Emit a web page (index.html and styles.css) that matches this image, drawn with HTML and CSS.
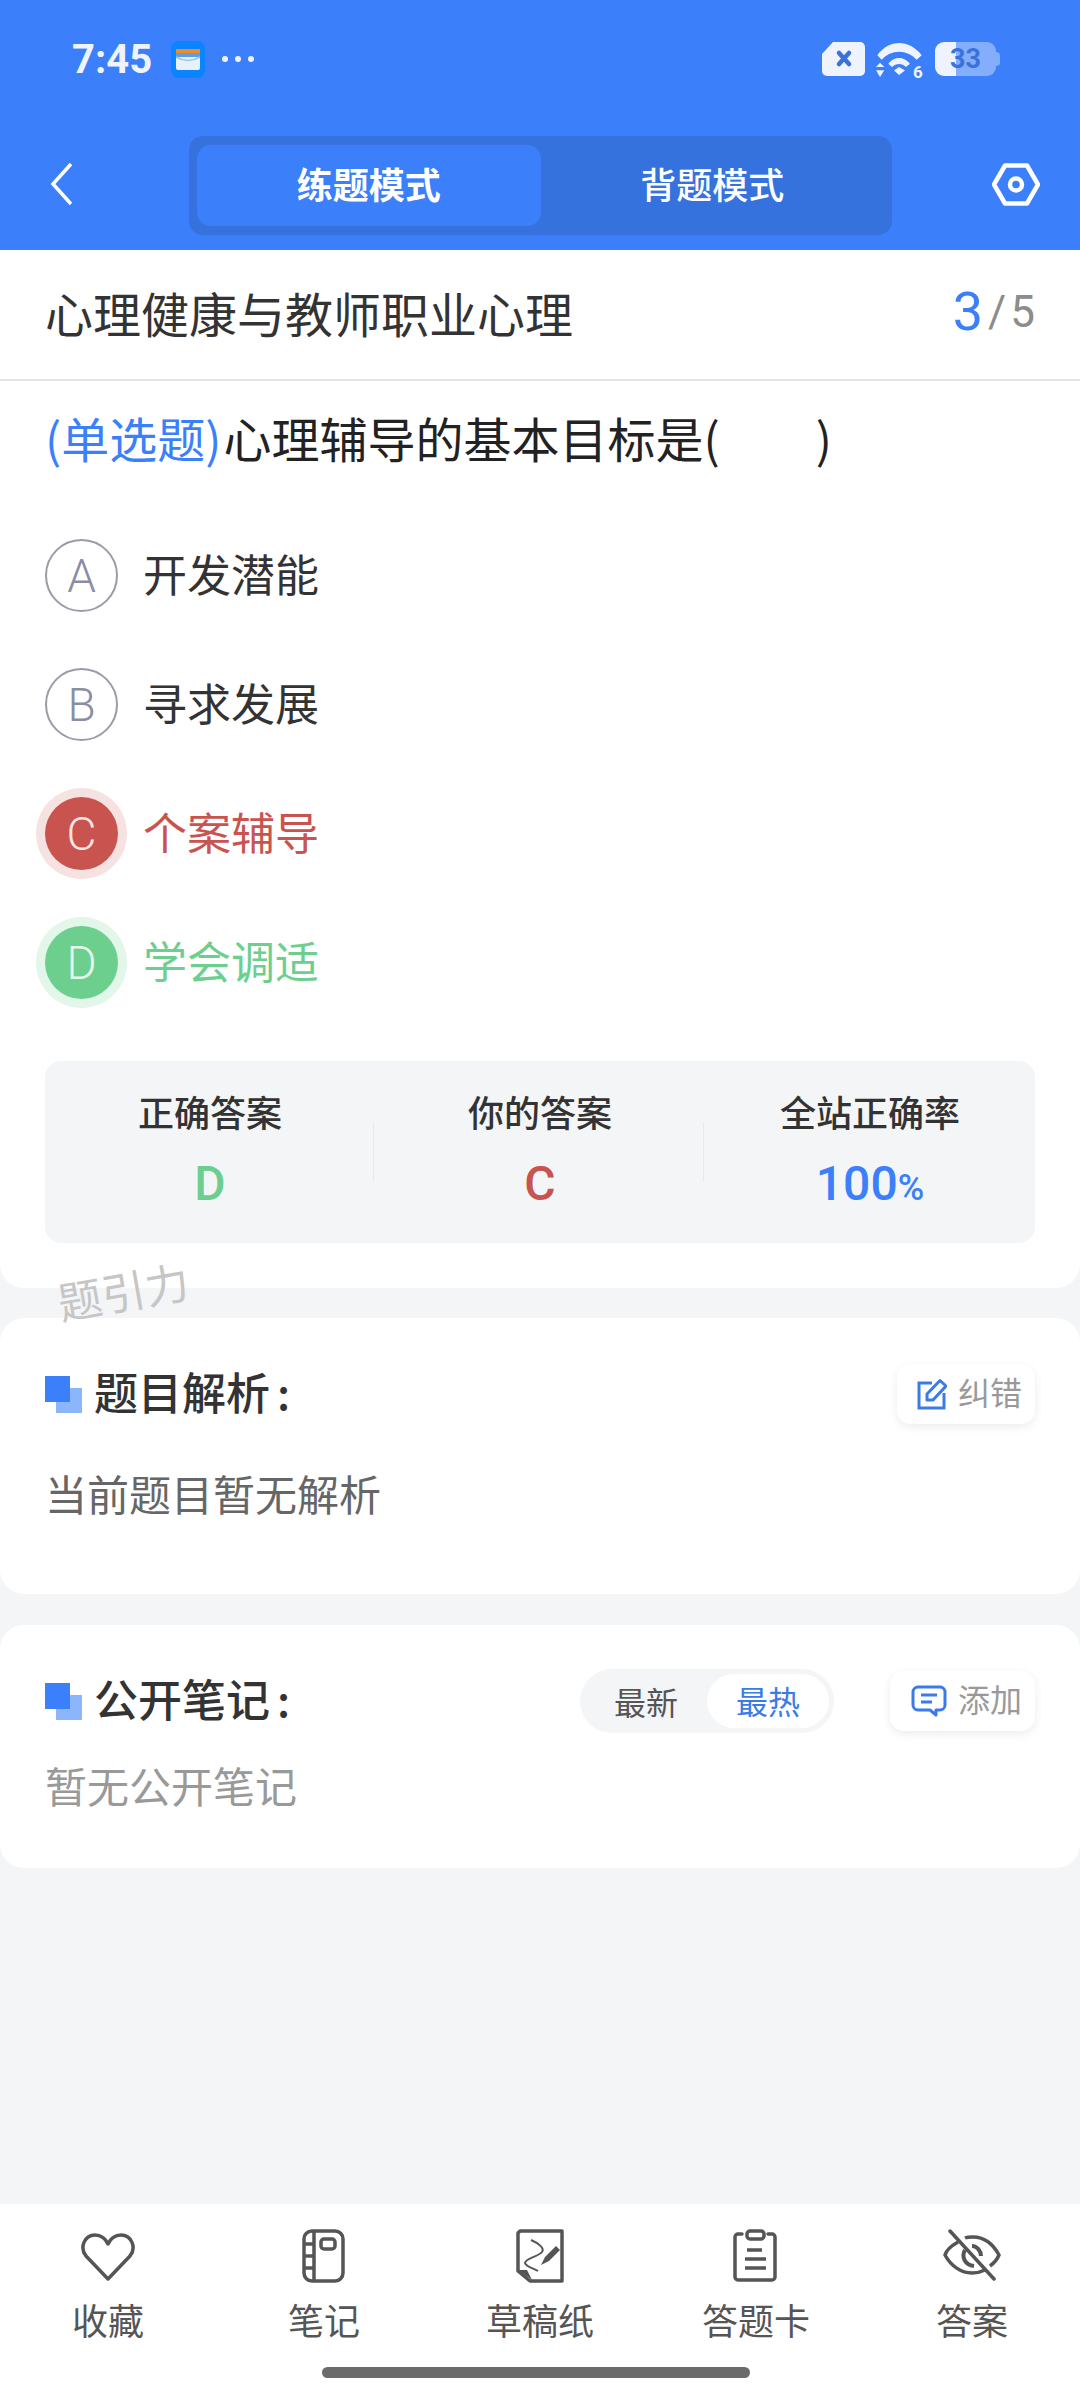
FILE: index.html
```html
<!DOCTYPE html>
<html lang="zh-CN">
<head>
<meta charset="UTF-8">
<meta name="viewport" content="width=device-width, initial-scale=1.0">
<title>练题模式</title>
<link rel="stylesheet" href="styles.css">
</head>
<body>
<div class="page">

<header class="top">
    <div class="status">
        <div class="status-left">
            <span class="time">7:45</span>
            <svg class="wallet" width="34" height="37" viewBox="0 0 34 37">
                <rect width="34" height="37" rx="8" fill="#0a84ff"/>
                <rect x="5" y="8" width="24" height="21" rx="2" fill="#e8f0fa"/>
                <rect x="5" y="8" width="24" height="4" fill="#f08a24"/>
                <rect x="5" y="12" width="24" height="4" fill="#5aa0e8"/>
                <path d="M5 16 Q17 23 29 16" stroke="#9cc4ee" stroke-width="1.5" fill="none"/>
            </svg>
            <span class="dots"><i></i><i></i><i></i></span>
        </div>
        <div class="status-right">
            <svg width="43" height="34" viewBox="0 0 43 34">
                <path d="M11 0H38a5 5 0 0 1 5 5V29a5 5 0 0 1-5 5H5a5 5 0 0 1-5-5V12Z" fill="#eef3fd"/>
                <path d="M17 11l10 11M27 11L17 22" stroke="#3a72dc" stroke-width="4.5" stroke-linecap="round"/>
            </svg>
            <svg class="wifi" width="48" height="42" viewBox="0 0 48 42">
                <path d="M1.300 12.300C13 -4 33 -4 45.700 12.300L40.700 16.700C31 6 15 6 5.700 16.700Z" fill="#eef3fd"/>
                <path d="M12.300 20.700C18 13 28 13 34 20.700L30 24C26 20 20 20 16 24Z" fill="#eef3fd"/>
                <path d="M18 27.500L23 24L29 27.500L23 32Z" fill="#eef3fd"/>
                <path d="M0 24L4 19.700L8.300 24ZM0 27.300H8.300L4 34Z" fill="#eef3fd"/>
                <text class="wifi-six" x="37" y="35">6</text>
            </svg>
            <div class="battery">33</div>
        </div>
    </div>
    <nav class="nav">
        <svg class="back" width="24" height="44" viewBox="0 0 24 44">
            <path d="M21 2L3 22L21 42" stroke="#fff" stroke-width="3.500" fill="none"/>
        </svg>
        <div class="mode-switch">
            <div class="mode mode-on">练题模式</div>
            <div class="mode">背题模式</div>
        </div>
        <svg class="gear" width="48" height="43" viewBox="0 0 48 43">
            <path d="M13 2.500H35L46 21.500L35 40.500H13L2 21.500Z" stroke="#fff" stroke-width="4.500" stroke-linejoin="round" fill="none"/>
            <circle cx="24" cy="21.500" r="6" stroke="#fff" stroke-width="4.500" fill="none"/>
        </svg>
    </nav>
</header>

<main class="main">
    <section class="card question">
        <div class="title-row">
            <div class="subject">心理健康与教师职业心理</div>
            <div class="count"><b>3</b><span class="slash">/</span><span>5</span></div>
        </div>
        <div class="stem"><span class="type">(单选题)</span>心理辅导的基本目标是(<span class="blank"></span>)</div>
        <div class="options">
            <div class="option"><span class="letter">A</span><span class="opt-text">开发潜能</span></div>
            <div class="option"><span class="letter">B</span><span class="opt-text">寻求发展</span></div>
            <div class="option wrong"><span class="letter">C</span><span class="opt-text">个案辅导</span></div>
            <div class="option right"><span class="letter">D</span><span class="opt-text">学会调适</span></div>
        </div>
        <div class="stats">
            <div class="stat"><div class="stat-name">正确答案</div><div class="stat-val green">D</div></div>
            <div class="stat"><div class="stat-name">你的答案</div><div class="stat-val red">C</div></div>
            <div class="stat"><div class="stat-name">全站正确率</div><div class="stat-val blue">100<small>%</small></div></div>
        </div>
    </section>
    <div class="watermark">题引力</div>

    <section class="card analysis">
        <div class="sec-head">
            <h2 class="sec-title"><span class="squares"></span>题目解析<span class="colon">:</span></h2>
            <div class="chip chip-fix">
                <svg width="30" height="32" viewBox="0 0 30 32">
                    <path d="M15 5H2V30H27V15" stroke="#3b7be8" stroke-width="3" fill="none"/>
                    <path d="M10 22V16L23 2.500L29 8L16 22Z" stroke="#3b7be8" stroke-width="3" stroke-linejoin="round" fill="none"/>
                </svg>
                <span class="chip-text">纠错</span>
            </div>
        </div>
        <p class="sec-text">当前题目暂无解析</p>
    </section>

    <section class="card notes">
        <div class="sec-head">
            <h2 class="sec-title"><span class="squares"></span>公开笔记<span class="colon">:</span></h2>
            <div class="sec-tools">
                <div class="sort"><span>最新</span><span class="sort-on">最热</span></div>
                <div class="chip chip-add">
                    <svg width="36" height="32" viewBox="0 0 36 32">
                        <path d="M7 2H29a5 5 0 0 1 5 5V20a5 5 0 0 1-5 5H25V30L19 25H7a5 5 0 0 1-5-5V7A5 5 0 0 1 7 2Z" stroke="#3b7be8" stroke-width="3" stroke-linejoin="round" fill="none"/>
                        <path d="M10 10H26M10 17H21" stroke="#3b7be8" stroke-width="3"/>
                    </svg>
                    <span class="chip-text">添加</span>
                </div>
            </div>
        </div>
        <p class="sec-text muted">暂无公开笔记</p>
    </section>
</main>

<footer class="bottom">
    <div class="tabs">
        <div class="tab">
            <svg width="56" height="54" viewBox="0 0 56 54">
                <path d="M28 50L6 27C-1 18 5 6 15 6C21 6 26 10 28 15C30 10 35 6 41 6C51 6 57 18 50 27Z" stroke="#555" stroke-width="3.500" stroke-linejoin="round" fill="none"/>
            </svg>
            <span>收藏</span>
        </div>
        <div class="tab">
            <svg width="56" height="54" viewBox="0 0 56 54">
                <rect x="8" y="2" width="39" height="50" rx="8" stroke="#555" stroke-width="3.500" fill="none"/>
                <path d="M18 2V52M8 15H18M8 27H18M8 39H18" stroke="#555" stroke-width="3.500" fill="none"/>
                <rect x="25" y="10" width="14" height="10" rx="3" stroke="#555" stroke-width="3.500" fill="none"/>
            </svg>
            <span>笔记</span>
        </div>
        <div class="tab">
            <svg width="56" height="54" viewBox="0 0 56 54">
                <path d="M8 2H50V52H18L6 42V4Z" stroke="#555" stroke-width="3.500" stroke-linejoin="round" fill="none"/>
                <path d="M6 41H15L20 51Z" fill="#555"/>
                <path d="M19 11C26 14 33 19 30 23C26 28 13 29 13 34C14 38 21 39 26 42" stroke="#555" stroke-width="2" fill="none"/>
                <path d="M29 36L33 28L44 17L48 21L37 32Z" fill="#555"/>
            </svg>
            <span>草稿纸</span>
        </div>
        <div class="tab">
            <svg width="56" height="54" viewBox="0 0 56 54">
                <path d="M14 5H10a3 3 0 0 0-3 3V48a3 3 0 0 0 3 3H44a3 3 0 0 0 3-3V8a3 3 0 0 0-3-3H40" stroke="#555" stroke-width="3.500" stroke-linecap="round" fill="none"/>
                <rect x="19" y="2" width="17" height="8" rx="3" stroke="#555" stroke-width="3.500" fill="none"/>
                <path d="M19 21H34M17 30H38M17 39H38" stroke="#555" stroke-width="3.500"/>
            </svg>
            <span>答题卡</span>
        </div>
        <div class="tab">
            <svg width="58" height="54" viewBox="0 0 58 54">
                <path d="M15 13C8 17 3 22 2 26C8 37 18 44 29 44C34 44 38 43 42 41M22 9C24 8 27 8 30 8C41 8 50 15 56 26C54 31 51 34 47 37" stroke="#555" stroke-width="3.500" fill="none"/>
                <path d="M22 21C18 28 22 36 31 37M29 17C34 17 38 22 38 27" stroke="#555" stroke-width="4" fill="none"/>
                <path d="M7 2L51 50" stroke="#555" stroke-width="3.500" stroke-linecap="round"/>
            </svg>
            <span>答案</span>
        </div>
    </div>
    <div class="home-bar"></div>
</footer>

</div>
</body>
</html>
```

FILE: styles.css
```css
* {
    box-sizing: border-box;
}
body {
    margin: 0;
    font-family: "Noto Sans CJK SC", "Noto Sans", sans-serif;
    background: #f4f5f7;
}
.page {
    width: 1080px;
    height: 2400px;
    display: flex;
    flex-direction: column;
    overflow: hidden;
}

/* blue header */
.top {
    height: 250px;
    background: #3b7ffa;
    color: #fff;
}
.status {
    height: 116px;
    padding: 38px 84px 0 72px;
    display: flex;
    justify-content: space-between;
    align-items: flex-start;
}
.status-left {
    display: flex;
    align-items: center;
    height: 42px;
}
.time {
    font-family: Roboto, sans-serif;
    font-weight: 700;
    font-size: 40px;
    color: #eef3fd;
    width: 99px;
}
.dots {
    display: flex;
    gap: 7px;
    margin-left: 17px;
}
.dots i {
    width: 6px;
    height: 6px;
    border-radius: 50%;
    background: #eef3fd;
}
.status-right {
    display: flex;
    align-items: flex-start;
    gap: 11px;
    margin-top: 4px;
}
.wifi {
    margin-top: 1px;
}
.wifi-six {
    font-family: Roboto, sans-serif;
    font-weight: 700;
    font-size: 17px;
    fill: #eef3fd;
}
.battery {
    position: relative;
    width: 61px;
    height: 34px;
    border-radius: 9px;
    background: linear-gradient(90deg, #eef3fd 0, #eef3fd 21px, #84aefb 21px);
    color: #3a72dc;
    font-family: Roboto, sans-serif;
    font-weight: 700;
    font-size: 27px;
    line-height: 34px;
    text-align: center;
}
.battery::after {
    content: "";
    position: absolute;
    right: -4px;
    top: 10px;
    width: 4px;
    height: 14px;
    border-radius: 0 4px 4px 0;
    background: #84aefb;
}
.nav {
    height: 134px;
    padding: 20px 40px 0 50px;
    display: flex;
    align-items: flex-start;
}
.back {
    margin-top: 26px;
}
.mode-switch {
    width: 703px;
    height: 99px;
    margin-left: 115px;
    padding: 9px 8px;
    display: flex;
    background: #3672dd;
    border-radius: 14px;
}
.mode {
    width: 344px;
    text-align: center;
    font-size: 36px;
    font-weight: 500;
    line-height: 76px;
}
.mode-on {
    background: #3b7ffa;
    border-radius: 14px;
    font-weight: 700;
}
.gear {
    margin-top: 27px;
    margin-left: 100px;
}

/* cards */
.main {
    flex: 1;
    position: relative;
}
.card {
    background: #fff;
    border-radius: 24px;
}
.question {
    height: 1038px;
    border-radius: 0 0 24px 24px;
}
.title-row {
    height: 131px;
    padding: 0 45px 6px 45px;
    border-bottom: 2px solid #e2e3e5;
    display: flex;
    justify-content: space-between;
    align-items: center;
}
.subject {
    font-size: 48px;
    color: #333;
}
.count {
    display: flex;
    align-items: center;
    font-family: Roboto, sans-serif;
    font-size: 44px;
    color: #8c8c8c;
}
.count b {
    font-weight: 400;
    font-size: 54px;
    color: #3b7ffa;
}
.slash {
    margin: 0 4px 0 5px;
}
.stem {
    padding: 26px 45px 0;
    font-size: 48px;
    line-height: 60px;
    color: #222;
    white-space: nowrap;
}
.type {
    color: #3b7ffa;
    margin-right: 2px;
}
.blank {
    display: inline-block;
    width: 96px;
}
.options {
    padding: 72px 45px 0;
    display: flex;
    flex-direction: column;
    gap: 56px;
}
.option {
    height: 73px;
    display: flex;
    align-items: center;
    gap: 25px;
    font-size: 44px;
    color: #333;
}
.opt-text {
    padding-bottom: 5px;
}
.letter {
    width: 73px;
    height: 73px;
    flex: none;
    border: 2px solid #9a9ca8;
    border-radius: 50%;
    color: #8b8ea3;
    font-family: Roboto, sans-serif;
    font-weight: 300;
    font-size: 46px;
    display: flex;
    align-items: center;
    justify-content: center;
}
.wrong {
    color: #c9534f;
}
.wrong .letter {
    background: #c9534f;
    border: 0;
    color: #fbe6e4;
    box-shadow: 0 0 0 9px #f6e2e1;
}
.right {
    color: #6ccf8e;
}
.right .letter {
    background: #6ccf8e;
    border: 0;
    color: #e6f8ec;
    box-shadow: 0 0 0 9px #e3f6ea;
}
.stats {
    margin: 62px 45px 0;
    height: 182px;
    padding-top: 29px;
    background: #f4f5f7;
    border-radius: 16px;
    display: flex;
}
.stat {
    flex: 1;
    height: 118px;
    text-align: center;
    position: relative;
}
.stat + .stat::before {
    content: "";
    position: absolute;
    left: -2px;
    top: 32px;
    height: 60px;
    width: 1px;
    background: #e8e9eb;
}
.stat-name {
    font-size: 36px;
    font-weight: 500;
    line-height: 42px;
    color: #333;
}
.stat-val {
    margin-top: 27px;
    font-family: Roboto, sans-serif;
    font-weight: 500;
    font-size: 48px;
    line-height: 50px;
}
.stat-val small {
    font-size: 36px;
}
.green {
    color: #6ccf8e;
}
.red {
    color: #c9534f;
}
.blue {
    color: #3b7ffa;
}
.watermark {
    position: absolute;
    left: 57px;
    top: 1008px;
    font-size: 44px;
    color: #c6c6c6;
    transform: rotate(-10deg);
}
.analysis {
    margin-top: 30px;
    height: 276px;
    padding: 45px 45px 0;
}
.notes {
    margin-top: 31px;
    height: 243px;
    padding: 45px 45px 0;
}
.sec-head {
    height: 62px;
    display: flex;
    justify-content: space-between;
    align-items: center;
}
.sec-title {
    margin: 0;
    padding-bottom: 6px;
    display: flex;
    align-items: center;
    font-size: 44px;
    font-weight: 500;
    color: #333;
}
.colon {
    margin-left: 7px;
}
.squares {
    position: relative;
    width: 37px;
    height: 37px;
    margin: 6px 12px 0 0;
}
.squares::before {
    content: "";
    position: absolute;
    left: 11px;
    top: 12px;
    width: 26px;
    height: 25px;
    background: #8cb6fb;
}
.squares::after {
    content: "";
    position: absolute;
    left: 0;
    top: 0;
    width: 25px;
    height: 26px;
    background: #3b7ffa;
}
.sec-text {
    margin: 0;
    font-size: 42px;
    color: #666;
}
.analysis .sec-text {
    margin-top: 37px;
}
.muted {
    color: #999;
    margin-top: 22px;
}
.chip {
    height: 60px;
    background: #fff;
    border-radius: 14px;
    box-shadow: 0 3px 10px rgba(0, 0, 0, 0.08);
    display: flex;
    align-items: center;
    font-size: 32px;
    color: #999;
}
.chip-text {
    padding-bottom: 7px;
}
.chip-fix {
    width: 138px;
    padding-left: 20px;
    gap: 11px;
}
.chip-add {
    width: 145px;
    padding-left: 21px;
    gap: 11px;
}
.sec-tools {
    display: flex;
    align-items: center;
    gap: 56px;
}
.sort {
    width: 254px;
    height: 64px;
    padding: 5px;
    background: #f4f5f7;
    border-radius: 32px;
    display: flex;
    justify-content: space-between;
    align-items: center;
    font-size: 32px;
    color: #555;
    padding-left: 34px;
}
.sort-on {
    width: 122px;
    height: 54px;
    line-height: 52px;
    text-align: center;
    background: #fff;
    border-radius: 27px;
    color: #3b7be8;
}

/* bottom bar */
.bottom {
    height: 196px;
    background: #fff;
}
.tabs {
    display: flex;
    padding-top: 25px;
}
.tab {
    width: 216px;
    display: flex;
    flex-direction: column;
    align-items: center;
    font-size: 36px;
    color: #555;
}
.tab span {
    margin-top: 11px;
    line-height: 50px;
}
.home-bar {
    width: 428px;
    height: 11px;
    margin: 23px 0 0 322px;
    border-radius: 6px;
    background: #6b6b6b;
}
```
